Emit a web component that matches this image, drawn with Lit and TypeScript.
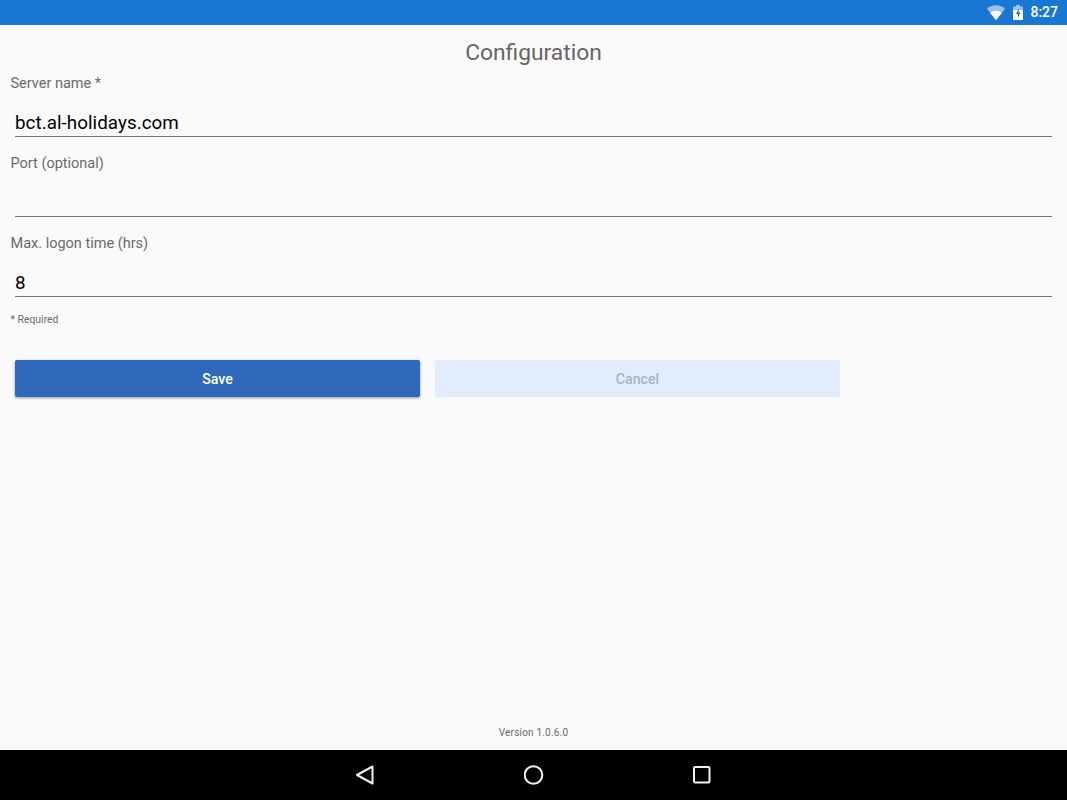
import { LitElement, html, css } from "lit";
import { customElement } from "lit/decorators.js";

@customElement("app-root")
export class AppRoot extends LitElement {
  static styles = css`
    :host { display: flex; flex-direction: column; height: 800px; width: 1067px; overflow: hidden; background: #fafafa; font-family: Roboto, "Liberation Sans", sans-serif; }
    .status { height: 25px; flex: none; background: #1976d2; display: flex; align-items: center; justify-content: flex-end; padding-right: 9px; box-sizing: border-box; color: #fff; }
    .status .time { font-size: 14px; font-weight: 500; margin-left: 7px; line-height: 25px; }
    .status svg { display: block; }
    .wifi { margin-right: 8px; }
    .main { flex: 1; display: flex; flex-direction: column; min-height: 0; }
    h1 { margin: 0; height: 50px; font-size: 22.8px; font-weight: 400; color: #666; text-align: center; line-height: 55px; }
    .fields { height: 238px; display: flex; flex-direction: column; flex: none; }
    .field { height: 80px; flex: none; display: flex; flex-direction: column; box-sizing: border-box; }
    .label { font-size: 14.5px; color: #6a6a6a; margin-left: 10.5px; height: 20px; line-height: 18px; }
    .value { margin: 16px 15px 0 15px; height: 25px; line-height: 25px; font-size: 18.8px; color: #000; border-bottom: 1px solid #757575; box-sizing: content-box; letter-spacing: 0.05px; flex: none; }
    .req { font-size: 10.4px; color: #6a6a6a; margin: 0 0 0 10.5px; height: 12px; line-height: 14px; }
    .actions { display: flex; gap: 15px; padding: 35px 0 0 15px; }
    .btn { width: 405px; height: 37px; border-radius: 2px; font-size: 14.2px; font-weight: 500; display: flex; align-items: center; justify-content: center; }
    .save { background: #2f69bb; color: #fff; box-shadow: 0 1px 3px rgba(0,0,0,.4); }
    .cancel { background: #e2ecfa; color: #a9b4c4; }
    .spacer { flex: 1; }
    .version { text-align: center; font-size: 10px; color: #6a6a6a; height: 24px; line-height: 14px; letter-spacing: 0.2px; }
    .nav { height: 50px; flex: none; background: #000; display: flex; align-items: center; justify-content: center; gap: 148.5px; }
    .nav svg { display: block; }
  `;

  render() {
    return html`
      <div class="status">
        <svg class="wifi" width="18" height="15" viewBox="0 0 18 14" preserveAspectRatio="none"><path d="M0 3.6C2.4 1.5 5.5.3 9 .3s6.6 1.2 9 3.3L9 14z" fill="#fff" opacity=".55"/><path d="M3.2 7.5C4.8 6.2 6.8 5.4 9 5.4s4.2.8 5.8 2.1L9 14z" fill="#fff"/></svg>
        <svg width="10" height="15" viewBox="0 0 10 15"><path d="M3 0h4v1.5H10V15H0V1.5h3z" fill="#fff" opacity=".55"/><path d="M0 5h10v10H0z" fill="#fff"/><path d="M5.8 3.5 3 9h2v3.8L7.6 7.6H5.6z" fill="#1976d2"/></svg>
        <span class="time">8:27</span>
      </div>
      <div class="main">
        <h1>Configuration</h1>
        <div class="fields">
          <div class="field">
            <div class="label">Server name *</div>
            <div class="value">bct.al-holidays.com</div>
          </div>
          <div class="field">
            <div class="label">Port (optional)</div>
            <div class="value"></div>
          </div>
          <div class="field">
            <div class="label">Max. logon time (hrs)</div>
            <div class="value">8</div>
          </div>
        </div>
        <div class="req">* Required</div>
        <div class="actions">
          <div class="btn save">Save</div>
          <div class="btn cancel">Cancel</div>
        </div>
        <div class="spacer"></div>
        <div class="version">Version 1.0.6.0</div>
      </div>
      <div class="nav">
        <svg width="20" height="20" viewBox="0 0 20 20"><path d="M2 10 17.5 1.5v17z" fill="none" stroke="#f2f2f2" stroke-width="2" stroke-linejoin="round"/></svg>
        <svg width="20" height="20" viewBox="0 0 20 20"><circle cx="9.5" cy="10" r="8.8" fill="none" stroke="#f2f2f2" stroke-width="2"/></svg>
        <svg width="20" height="20" viewBox="0 0 20 20"><rect x="2" y="2" width="15.5" height="15.5" rx="1" fill="none" stroke="#f2f2f2" stroke-width="2"/></svg>
      </div>
    `;
  }
}
